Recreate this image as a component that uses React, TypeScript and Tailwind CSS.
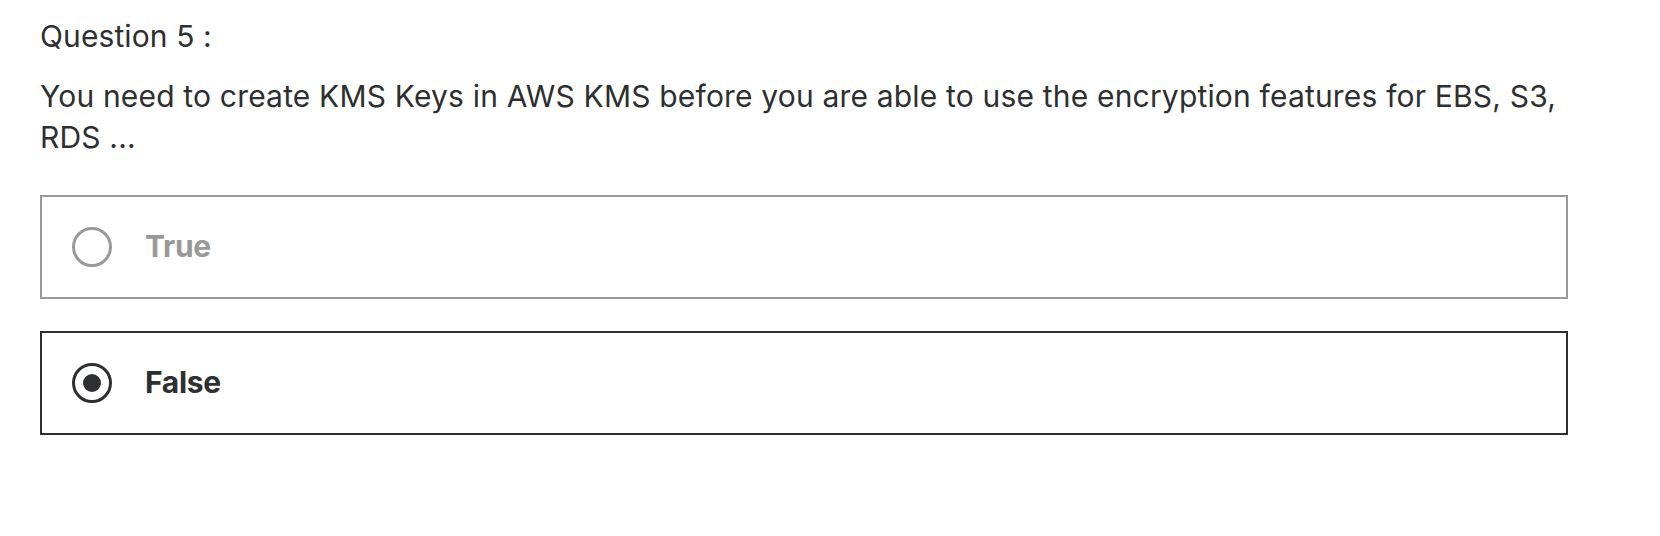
import { useState } from "react";

const options = ["True", "False"];

export default function App() {
  const [selected, setSelected] = useState(1);

  return (
    <div className="min-h-screen bg-white px-[40px] pt-[16px] text-[#2d2f31] font-['Inter',sans-serif]">
      <div className="w-[1528px]">
        <div className="text-[30px] leading-[41px] tracking-[0.1px]">Question 5 :</div>
        <p className="mt-[19px] text-[30px] leading-[41px] tracking-[0.18px]">
          You need to create KMS Keys in AWS KMS before you are able to use the encryption features for EBS, S3,
          RDS ...
        </p>

        <div className="mt-[37px] flex flex-col gap-[32px]">
          {options.map((label, i) => {
            const on = selected === i;
            return (
              <button
                key={label}
                onClick={() => setSelected(i)}
                className={`flex h-[104px] w-full items-center border-2 pl-[30px] text-left ${
                  on ? "border-[#2d2f31]" : "border-[#999999]"
                }`}
              >
                <span
                  className={`flex h-[40px] w-[40px] items-center justify-center rounded-full border-[3px] ${
                    on ? "border-[#2d2f31]" : "border-[#9a9a9a]"
                  }`}
                >
                  {on && <span className="h-[18px] w-[18px] rounded-full bg-[#2d2f31]" />}
                </span>
                <span
                  className={`ml-[33px] pb-[2px] text-[30px] font-bold tracking-[-0.3px] ${
                    on ? "text-[#2d2f31]" : "text-[#999999]"
                  }`}
                >
                  {label}
                </span>
              </button>
            );
          })}
        </div>
      </div>
    </div>
  );
}
